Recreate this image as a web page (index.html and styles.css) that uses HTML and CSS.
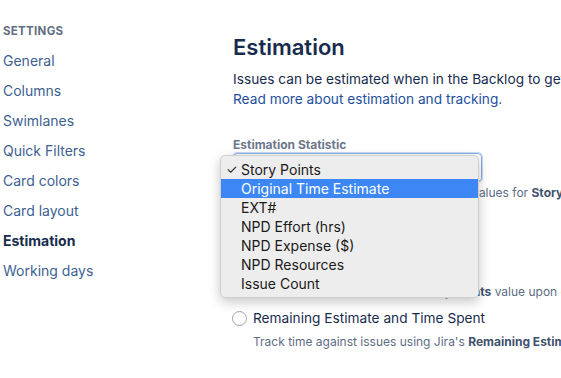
FILE: index.html
```html
<!DOCTYPE html>
<html lang="en">
<head>
    <meta charset="UTF-8">
    <meta name="viewport" content="width=device-width, initial-scale=1.0">
    <title>Board settings - Estimation</title>
    <link rel="stylesheet" href="styles.css">
</head>
<body>
    <div class="page">
        <nav class="sidebar">
            <div class="sidebar-title">SETTINGS</div>
            <a href="#">General</a>
            <a href="#">Columns</a>
            <a href="#">Swimlanes</a>
            <a href="#">Quick Filters</a>
            <a href="#">Card colors</a>
            <a href="#">Card layout</a>
            <a href="#" class="active">Estimation</a>
            <a href="#">Working days</a>
        </nav>
        <main class="content">
            <h1>Estimation</h1>
            <p class="intro">Issues can be estimated when in the Backlog to get an idea of how much work is in each sprint.<br>
                <a href="#">Read more about estimation and tracking.</a></p>

            <div class="field">
                <label class="field-label">Estimation Statistic</label>
                <div class="select-wrap">
                    <div class="select">
                        <span class="select-value">Story Points</span>
                        <span class="stepper">
                            <svg width="7" height="11" viewBox="0 0 7 11"><path d="M3.5 0.5 L6.5 4 L0.5 4 Z M3.5 10.5 L6.5 7 L0.5 7 Z" fill="#333"/></svg>
                        </span>
                    </div>
                    <ul class="menu">
                        <li class="checked">Story Points</li>
                        <li class="hover">Original Time Estimate</li>
                        <li>EXT#</li>
                        <li>NPD Effort (hrs)</li>
                        <li>NPD Expense ($)</li>
                        <li>NPD Resources</li>
                        <li>Issue Count</li>
                    </ul>
                </div>
                <p class="desc">The statistic used to estimate it, based on values for <b>Story Points</b>.</p>
            </div>

            <div class="field">
                <h3>Time Tracking</h3>
                <label class="radio"><span class="radio-dot"></span>None</label>
                <p class="desc radio-desc">Each issue will burn down its <b>Story Points</b> value upon completion.</p>
                <label class="radio"><span class="radio-dot"></span>Remaining Estimate and Time Spent</label>
                <p class="desc radio-desc">Track time against issues using Jira's <b>Remaining Estimate and Time Spent</b> fields.</p>
            </div>
        </main>
    </div>
</body>
</html>
```

FILE: styles.css
```css
body {
    margin: 0;
    padding: 0;
    background: #fff;
    font-family: Inter, "Noto Sans", sans-serif;
    color: #172b4d;
    overflow: hidden;
}
.page {
    display: flex;
    width: 900px;
}
.sidebar {
    width: 230px;
    flex-shrink: 0;
    padding: 16px 0 0 3px;
    display: flex;
    flex-direction: column;
}
.sidebar-title {
    font-size: 11.5px;
    font-weight: 700;
    color: #626f82;
    line-height: 30px;
    letter-spacing: 0.3px;
}
.sidebar a {
    font-size: 14px;
    line-height: 30px;
    color: #3d5f91;
    text-decoration: none;
}
.sidebar a.active {
    color: #172b4d;
    font-weight: 700;
}
.content {
    flex: 1;
    white-space: nowrap;
}
h1 {
    font-size: 22px;
    font-weight: 600;
    line-height: 30px;
    margin: 32px 0 7px;
}
.intro {
    font-size: 13.7px;
    line-height: 20px;
    margin: 0;
}
.intro a {
    color: #1d4f9c;
    text-decoration: none;
}
.field-label {
    display: block;
    margin-top: 28px;
    font-size: 12px;
    font-weight: 700;
    line-height: 16px;
    color: #6b778c;
}
.select-wrap {
    position: relative;
}
.select {
    width: 235px;
    height: 27px;
    border: 1px solid #89acdf;
    border-radius: 4px;
    box-shadow: 0 0 0 1px #c9dbf5;
    display: flex;
    align-items: center;
    justify-content: space-between;
    padding: 0 4px 0 8px;
    box-sizing: content-box;
    font-size: 14px;
}
.stepper {
    display: flex;
    margin-top: 1px;
}
.menu {
    position: absolute;
    left: -13px;
    top: 2px;
    width: 259px;
    margin: 0;
    padding: 4px 0 4px;
    list-style: none;
    background: #ededed;
    border: 1px solid #cfcfcf;
    border-radius: 5px;
    box-shadow: 0 4px 12px rgba(0, 0, 0, 0.22);
    box-sizing: border-box;
    z-index: 2;
}
.menu li {
    font-size: 14px;
    line-height: 19px;
    padding-left: 20px;
    color: #1a1a1a;
    position: relative;
}
.menu li.checked::before {
    content: "\2713";
    position: absolute;
    left: 5px;
    font-size: 13px;
}
.menu li.hover {
    background: #3c87f4;
    color: #fff;
}
.desc {
    font-size: 12px;
    line-height: 16px;
    color: #5e6c84;
    margin: 3px 0 0;
}
.desc b {
    color: #42526e;
}
h3 {
    font-size: 16px;
    font-weight: 500;
    line-height: 20px;
    margin: 23px 0 16px;
}
.radio {
    display: flex;
    align-items: center;
    font-size: 13.7px;
    line-height: 20px;
    margin-left: -1px;
}
.radio + .radio-desc {
    margin-top: 4px;
}
.radio-desc {
    padding-left: 20px;
}
.radio-desc + .radio {
    margin-top: 8px;
}
.radio-desc:last-child {
    margin-top: 6px;
}
.radio-dot {
    width: 13px;
    height: 13px;
    border: 1px solid #a5a5a5;
    border-radius: 50%;
    background: #fff;
    margin-right: 6px;
}
```
